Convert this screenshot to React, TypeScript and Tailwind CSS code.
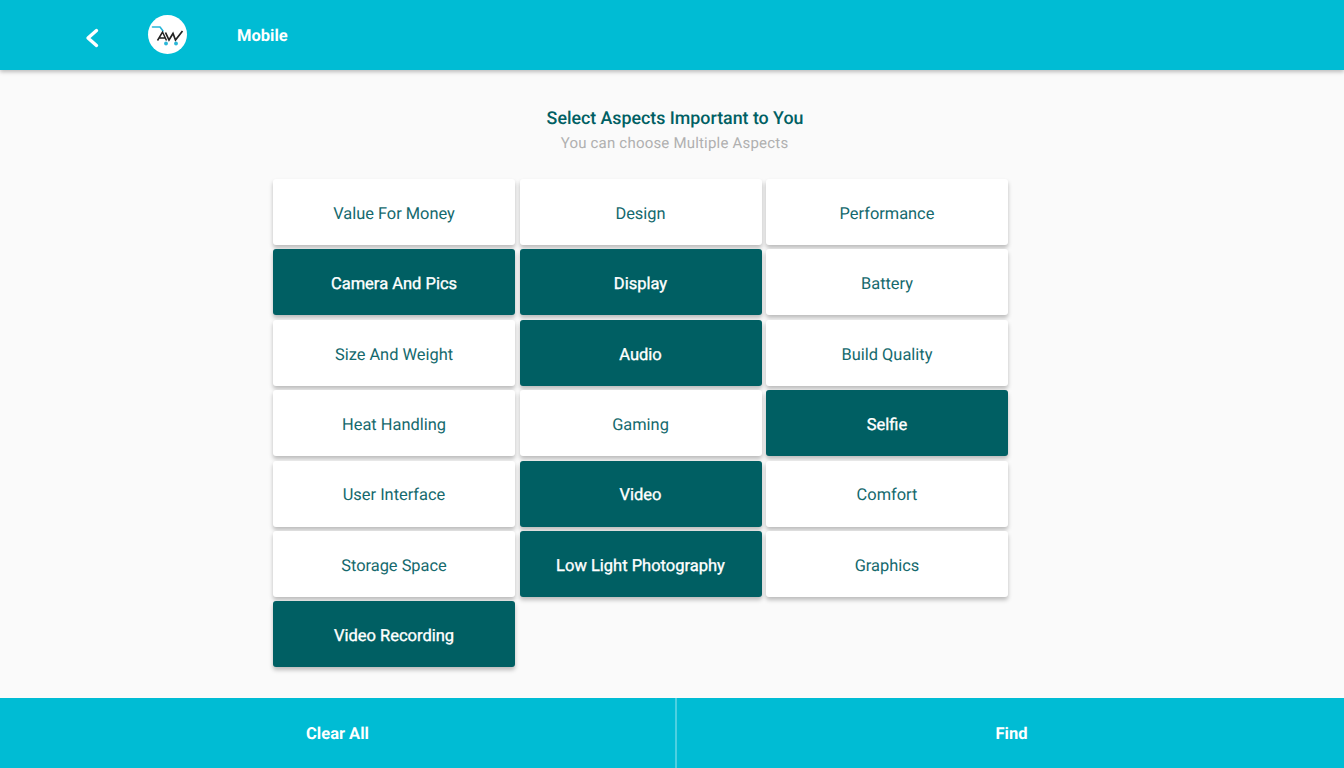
const items: [string, boolean][] = [
  ["Value For Money", false],
  ["Design", false],
  ["Performance", false],
  ["Camera And Pics", true],
  ["Display", true],
  ["Battery", false],
  ["Size And Weight", false],
  ["Audio", true],
  ["Build Quality", false],
  ["Heat Handling", false],
  ["Gaming", false],
  ["Selfie", true],
  ["User Interface", false],
  ["Video", true],
  ["Comfort", false],
  ["Storage Space", false],
  ["Low Light Photography", true],
  ["Graphics", false],
  ["Video Recording", true],
];

function Logo() {
  return (
    <div className="w-[39px] h-[39px] rounded-full bg-white flex items-center justify-center">
      <svg width="39" height="39" viewBox="0 0 39 39" fill="none">
        <path d="M4.5 12 H12 L15 16" stroke="#29b6d8" strokeWidth="1.6" strokeLinecap="round" strokeLinejoin="round" />
        <path d="M9.5 25.5 L14.5 17 L18.5 25.5 M11.5 23 H17.5" stroke="#222" strokeWidth="1.5" />
        <path d="M17.5 17.5 L21 25 L25 18.5 L27.5 25 L34.5 16" stroke="#222" strokeWidth="1.7" />
        <circle cx="18" cy="28.5" r="1.9" fill="#29b6d8" />
        <circle cx="28" cy="28.5" r="1.9" fill="#29b6d8" />
      </svg>
    </div>
  );
}

export default function App() {
  return (
    <div className="w-[1344px] h-[768px] flex flex-col bg-[#fafafa] overflow-hidden font-['Roboto',sans-serif] [text-rendering:geometricPrecision]">
      <header className="h-[70px] shrink-0 bg-[#00bcd4] flex items-center shadow-[0_2px_4px_rgba(0,0,0,0.25)] z-10">
        <svg className="ml-[82px] mt-[5px]" width="20" height="24" viewBox="0 0 20 24" fill="none">
          <path d="M14.5 4.5 L6 12 L14.5 19.5" stroke="#fff" strokeWidth="3.4" strokeLinecap="round" strokeLinejoin="round" />
        </svg>
        <div className="ml-[46px] mb-[1px]">
          <Logo />
        </div>
        <span className="ml-[50px] pt-[4px] text-white text-[16.5px] font-bold">Mobile</span>
      </header>
      <main className="flex-1 flex flex-col min-h-0">
        <h1 className="mt-[37px] pl-[6px] text-center text-[#005f63] text-[17.8px] leading-[24px] font-medium">
          Select Aspects Important to You
        </h1>
        <p className="mt-[2px] pl-[5px] text-center text-[#b0b0b0] text-[15px] tracking-[0.2px] leading-[20px]">
          You can choose Multiple Aspects
        </p>
        <div className="mt-[26px] ml-[273px] w-[735px] grid grid-cols-[repeat(3,242px)] gap-x-[4.5px] gap-y-[4.4px]">
          {items.map(([label, on]) => (
            <div
              key={label}
              className={
                on
                  ? "h-[66px] pt-[6.4px] rounded-[3px] bg-[#005f63] text-white text-[16.5px] [-webkit-text-stroke:0.35px_white] flex items-center justify-center shadow-[0_3px_4px_rgba(0,0,0,0.25)]"
                  : "h-[66px] pt-[6.4px] rounded-[3px] bg-white text-[#14696d] text-[16.4px] flex items-center justify-center shadow-[0_3px_4px_rgba(0,0,0,0.25)]"
              }
            >
              {label}
            </div>
          ))}
        </div>
      </main>
      <footer className="h-[70px] shrink-0 bg-[#00bcd4] flex text-white text-[16.5px] font-bold">
        <div className="w-[675px] pt-[4px] flex items-center justify-center">Clear All</div>
        <div className="w-[2px] bg-[#4dd0e1]" />
        <div className="flex-1 pt-[4px] pl-[2px] flex items-center justify-center">Find</div>
      </footer>
    </div>
  );
}
